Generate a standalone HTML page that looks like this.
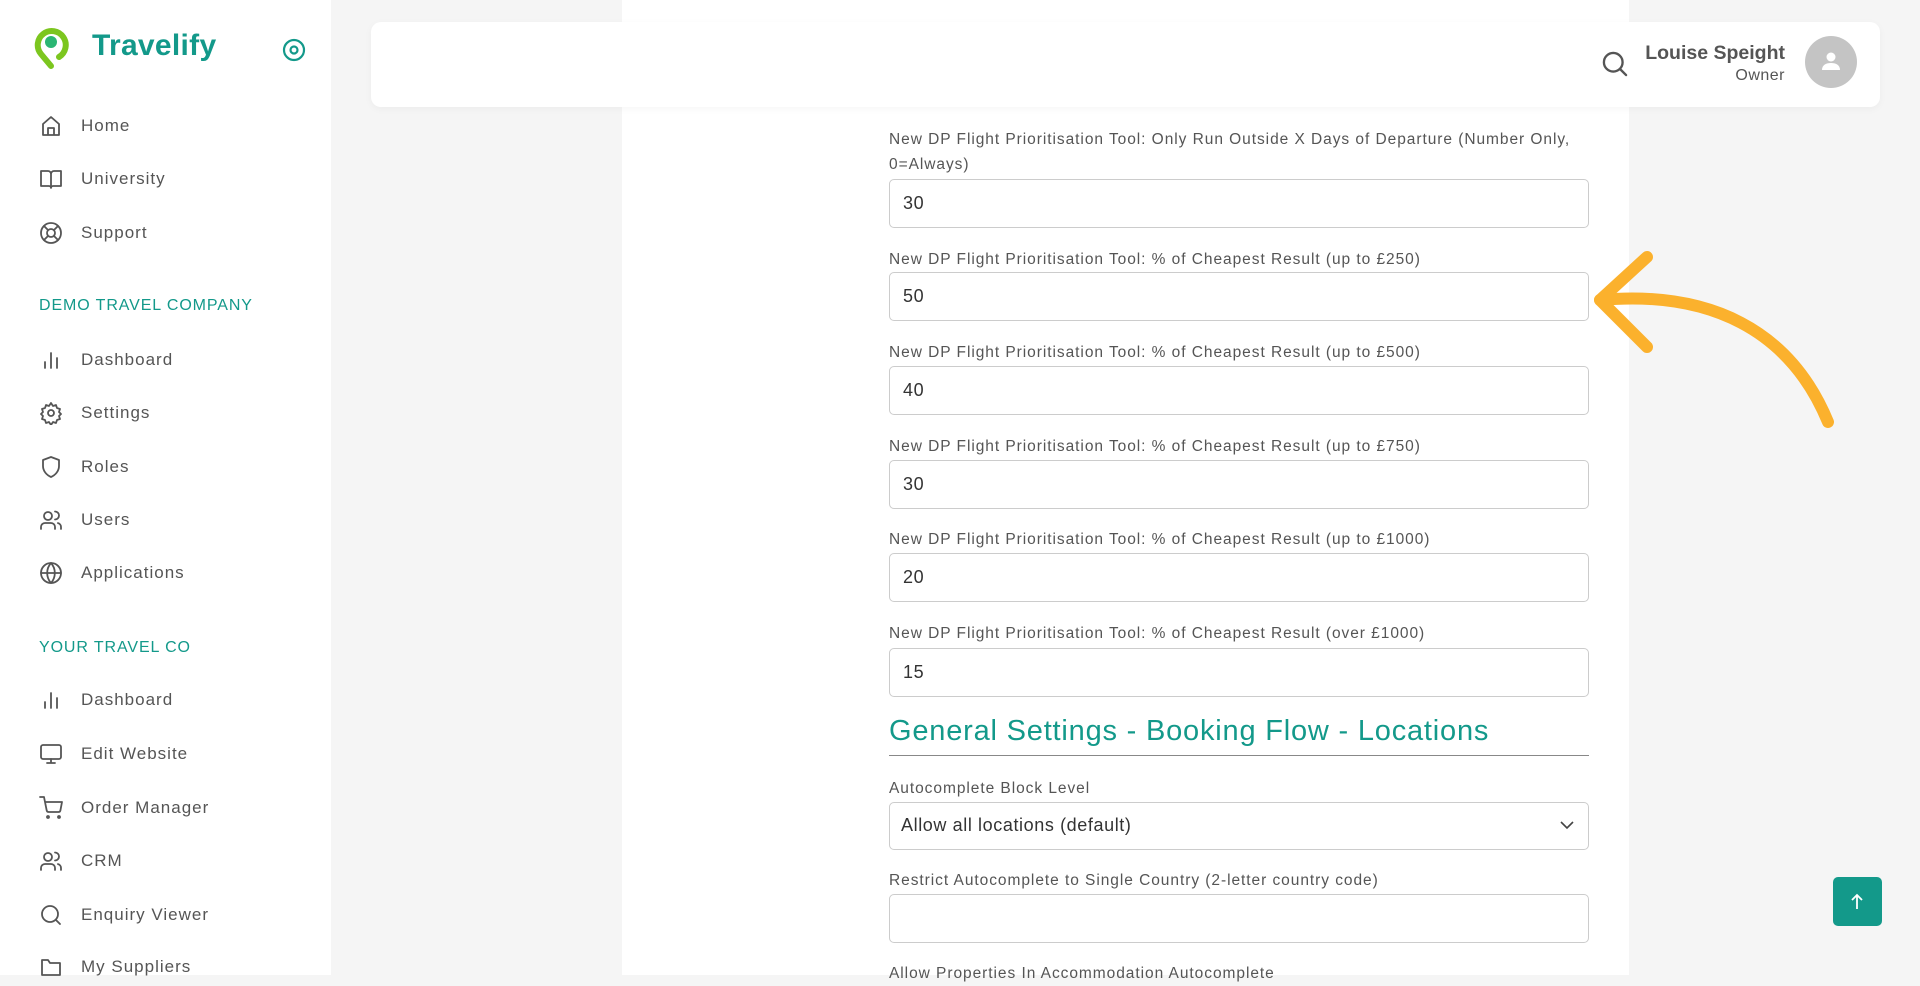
<!DOCTYPE html>
<html><head><meta charset="utf-8"><style>
*{box-sizing:border-box;margin:0;padding:0}
body{width:1920px;height:975px;overflow:hidden;background:#f5f5f5;font-family:"Liberation Sans",sans-serif;position:relative;color:#444}
.sb{position:absolute;left:0;top:0;width:331px;height:975px;background:#fff}
.logo{position:absolute;left:92px;top:29px;font-size:30px;font-weight:bold;color:#13998a;letter-spacing:.3px}
.nav{position:absolute;left:39px;height:30px;display:flex;align-items:center;font-size:17px;color:#555;letter-spacing:1px}
.nav svg{width:24px;height:24px;margin-right:18px;fill:none;stroke:#555;stroke-width:1.8;stroke-linecap:round;stroke-linejoin:round}
.sec{position:absolute;left:39px;font-size:16px;color:#13998a;letter-spacing:.9px}
.card{position:absolute;left:622px;top:0;width:1007px;height:975px;background:#fff}
.hdr{position:absolute;left:371px;top:22px;width:1509px;height:85px;background:#fff;border-radius:10px;box-shadow:0 2px 8px rgba(0,0,0,.04)}
.lbl{position:absolute;left:889px;width:700px;font-size:15.5px;color:#555;line-height:25px;letter-spacing:.95px}
.inp{position:absolute;left:889px;width:700px;height:49px;border:1.5px solid #ccc;border-radius:5px;font-size:18px;color:#333;padding-left:13px;line-height:46px;letter-spacing:.6px}
</style></head><body>
<div class="sb">
<svg style="position:absolute;left:33px;top:25px" width="36" height="44" viewBox="0 0 36 44"><path d="M18 41 L8 29 A14 14 0 1 1 26 32" fill="none" stroke="#7cc61f" stroke-width="6" stroke-linecap="round"/><circle cx="18" cy="17" r="6" fill="#2bb673"/></svg>
<div class="logo">Travelify</div>
<svg style="position:absolute;left:282px;top:38px" width="24" height="24" viewBox="0 0 24 24"><circle cx="12" cy="12" r="10" fill="none" stroke="#13998a" stroke-width="2.2"/><circle cx="12" cy="12" r="3.5" fill="none" stroke="#13998a" stroke-width="2.2"/></svg>
<div class="nav" style="top:111px"><svg viewBox="0 0 24 24"><path d="M4 21V10l8-7 8 7v11H4zM9 21v-7h6v7"/></svg>Home</div>
<div class="nav" style="top:164px"><svg viewBox="0 0 24 24"><path d="M2 4h7a3 3 0 0 1 3 3v14a2 2 0 0 0-2-2H2zM22 4h-7a3 3 0 0 0-3 3v14a2 2 0 0 1 2-2h8z"/></svg>University</div>
<div class="nav" style="top:218px"><svg viewBox="0 0 24 24"><circle cx="12" cy="12" r="10"/><circle cx="12" cy="12" r="4"/><path d="M5 5l4 4M15 15l4 4M19 5l-4 4M9 15l-4 4"/></svg>Support</div>
<div class="sec" style="top:297px">DEMO TRAVEL COMPANY</div>
<div class="nav" style="top:345px"><svg viewBox="0 0 24 24"><path d="M6 20v-6M12 20V5M18 20v-10"/></svg>Dashboard</div>
<div class="nav" style="top:398px"><svg viewBox="0 0 24 24"><circle cx="12" cy="12" r="3"/><path d="M12 2l2 3 3-1 1 3 3 1-1 3 2 2-2 2 1 3-3 1-1 3-3-1-2 3-2-3-3 1-1-3-3-1 1-3-2-2 2-2-1-3 3-1 1-3 3 1z"/></svg>Settings</div>
<div class="nav" style="top:452px"><svg viewBox="0 0 24 24"><path d="M12 2l8 3v6c0 5-3.5 9-8 11-4.5-2-8-6-8-11V5z"/></svg>Roles</div>
<div class="nav" style="top:505px"><svg viewBox="0 0 24 24"><circle cx="9" cy="8" r="4"/><path d="M2 21v-2a4 4 0 0 1 4-4h6a4 4 0 0 1 4 4v2M16 3.5a4 4 0 0 1 0 8M22 21v-2a4 4 0 0 0-3-3.9"/></svg>Users</div>
<div class="nav" style="top:558px"><svg viewBox="0 0 24 24"><circle cx="12" cy="12" r="10"/><path d="M2 12h20M12 2a15 15 0 0 1 0 20M12 2a15 15 0 0 0 0 20"/></svg>Applications</div>
<div class="sec" style="top:639px">YOUR TRAVEL CO</div>
<div class="nav" style="top:685px"><svg viewBox="0 0 24 24"><path d="M6 20v-6M12 20V5M18 20v-10"/></svg>Dashboard</div>
<div class="nav" style="top:739px"><svg viewBox="0 0 24 24"><rect x="2" y="3" width="20" height="14" rx="2"/><path d="M8 21h8M12 17v4"/></svg>Edit Website</div>
<div class="nav" style="top:793px"><svg viewBox="0 0 24 24"><circle cx="9" cy="21" r="1"/><circle cx="20" cy="21" r="1"/><path d="M1 1h4l2.7 13.4a2 2 0 0 0 2 1.6h9.7a2 2 0 0 0 2-1.6L23 6H6"/></svg>Order Manager</div>
<div class="nav" style="top:846px"><svg viewBox="0 0 24 24"><circle cx="9" cy="8" r="4"/><path d="M2 21v-2a4 4 0 0 1 4-4h6a4 4 0 0 1 4 4v2M16 3.5a4 4 0 0 1 0 8M22 21v-2a4 4 0 0 0-3-3.9"/></svg>CRM</div>
<div class="nav" style="top:900px"><svg viewBox="0 0 24 24"><circle cx="11" cy="11" r="8"/><path d="M21 21l-4.3-4.3"/></svg>Enquiry Viewer</div>
<div class="nav" style="top:952px"><svg viewBox="0 0 24 24"><path d="M3 5h6l2 3h10v12H3z"/></svg>My Suppliers</div>
</div>
<div class="card"></div>
<div style="position:absolute;left:889px;top:106px;width:700px;border-top:1px solid #ddd"></div>
<div class="lbl" style="top:127px">New DP Flight Prioritisation Tool: Only Run Outside X Days of Departure (Number Only, 0=Always)</div>
<div class="inp" style="top:179px">30</div>
<div class="lbl" style="top:247px">New DP Flight Prioritisation Tool: % of Cheapest Result (up to £250)</div>
<div class="inp" style="top:272px">50</div>
<div class="lbl" style="top:340px">New DP Flight Prioritisation Tool: % of Cheapest Result (up to £500)</div>
<div class="inp" style="top:366px">40</div>
<div class="lbl" style="top:434px">New DP Flight Prioritisation Tool: % of Cheapest Result (up to £750)</div>
<div class="inp" style="top:460px">30</div>
<div class="lbl" style="top:527px">New DP Flight Prioritisation Tool: % of Cheapest Result (up to £1000)</div>
<div class="inp" style="top:553px">20</div>
<div class="lbl" style="top:621px">New DP Flight Prioritisation Tool: % of Cheapest Result (over £1000)</div>
<div class="inp" style="top:648px">15</div>
<div style="position:absolute;left:889px;top:715px;font-size:29px;color:#13998a;letter-spacing:.8px">General Settings - Booking Flow - Locations</div>
<div style="position:absolute;left:889px;top:755px;width:700px;border-top:1.5px solid #888"></div>
<div class="lbl" style="top:776px">Autocomplete Block Level</div>
<div class="inp" style="top:802px;height:48px;line-height:45px;padding-left:11px">Allow all locations (default)<svg style="position:absolute;right:14px;top:17px" width="14" height="10" viewBox="0 0 14 10"><path d="M1 2l6 6 6-6" fill="none" stroke="#444" stroke-width="1.6"/></svg></div>
<div class="lbl" style="top:868px">Restrict Autocomplete to Single Country (2-letter country code)</div>
<div class="inp" style="top:894px"></div>
<div class="lbl" style="top:961px">Allow Properties In Accommodation Autocomplete</div>
<div class="hdr">
<svg style="position:absolute;left:1230px;top:28px" width="28" height="28" viewBox="0 0 24 24"><circle cx="10.5" cy="10.5" r="8" fill="none" stroke="#555" stroke-width="2"/><path d="M16.5 16.5l5 5" stroke="#555" stroke-width="2" stroke-linecap="round"/></svg>
<div style="position:absolute;right:95px;top:20px;font-size:19.5px;font-weight:bold;color:#555;text-align:right">Louise Speight</div>
<div style="position:absolute;right:95px;top:45px;font-size:16px;color:#555;text-align:right;letter-spacing:.5px">Owner</div>
<div style="position:absolute;left:1434px;top:14px;width:52px;height:52px;border-radius:50%;background:#c4c4c4"><svg style="position:absolute;left:14px;top:13px" width="24" height="24" viewBox="0 0 24 24"><circle cx="12" cy="8" r="4.5" fill="#fff"/><path d="M3 21c0-5 4-7 9-7s9 2 9 7z" fill="#fff"/></svg></div>
</div>
<svg style="position:absolute;left:0;top:0" width="1920" height="975"><path d="M1828 422 C1790 330 1710 290 1600 300" fill="none" stroke="#fbb12d" stroke-width="12" stroke-linecap="round"/><path d="M1647 257 L1600 300 L1647 347" fill="none" stroke="#fbb12d" stroke-width="12" stroke-linecap="round" stroke-linejoin="round"/></svg>
<div style="position:absolute;left:1833px;top:877px;width:49px;height:49px;background:#13998a;border-radius:5px"><svg style="position:absolute;left:17px;top:16px" width="14" height="17" viewBox="0 0 14 17"><path d="M7 16V2M2 7l5-5 5 5" fill="none" stroke="#fff" stroke-width="1.8"/></svg></div>
</body></html>
